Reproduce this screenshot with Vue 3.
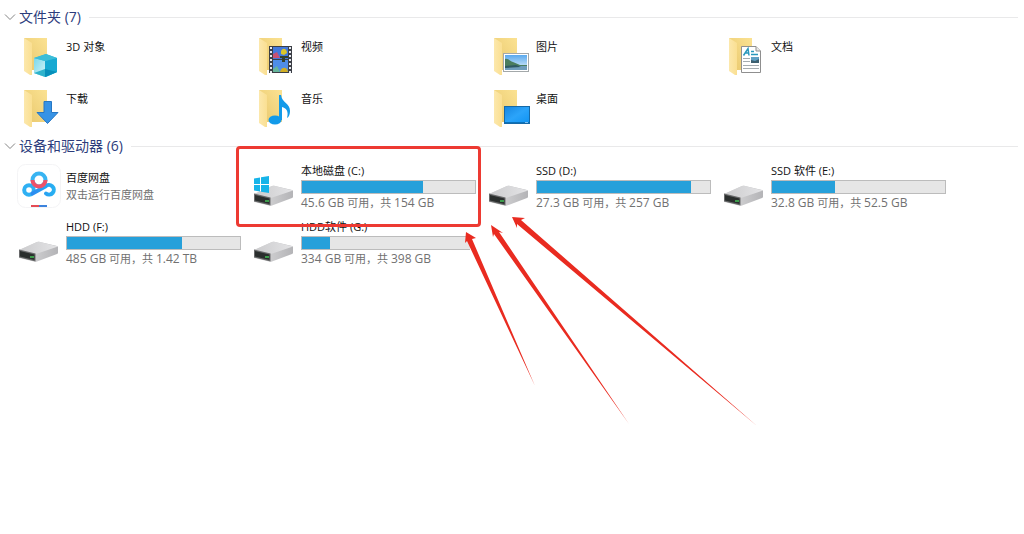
<script setup>
import { ref } from 'vue'

const folders = [
  { name: '3D 对象', kind: 'cube' },
  { name: '视频', kind: 'video' },
  { name: '图片', kind: 'picture' },
  { name: '文档', kind: 'document' },
  { name: '下载', kind: 'download' },
  { name: '音乐', kind: 'music' },
  { name: '桌面', kind: 'desktop' }
]

const drives = [
  { name: '本地磁盘 (C:)', used: 70, free: '45.6 GB', total: '154 GB', system: true },
  { name: 'SSD (D:)', used: 89, free: '27.3 GB', total: '257 GB' },
  { name: 'SSD 软件 (E:)', used: 36.5, free: '32.8 GB', total: '52.5 GB' },
  { name: 'HDD (F:)', used: 66.5, free: '485 GB', total: '1.42 TB' },
  { name: 'HDD软件 (G:)', used: 16.7, free: '334 GB', total: '398 GB', cut: true }
]

const arrows = [
  '466,232 476,238 472,239 535,386 467,241 465,243',
  '491,225 503,233 499,232 629,424 494,234 493,237',
  '512,217 525,218 521,220 757,426 517,224 517,228'
]

const foldersOpen = ref(true)
const drivesOpen = ref(true)
</script>

<template>
  <main class="explorer">
    <svg class="defs" width="0" height="0" aria-hidden="true">
      <defs>
        <linearGradient id="folderBack" x1="0" x2="1" y1="1" y2="0">
          <stop offset="0" stop-color="#e8c76c" /><stop offset="1" stop-color="#fbe292" />
        </linearGradient>
        <linearGradient id="folderFront" x1="0" x2="1">
          <stop offset="0" stop-color="#fce8ac" /><stop offset="1" stop-color="#fadf92" />
        </linearGradient>
        <linearGradient id="driveTop" x1="0" x2="1">
          <stop offset="0" stop-color="#cbcbcd" /><stop offset="1" stop-color="#e4e4e6" />
        </linearGradient>
        <linearGradient id="driveSide" x1="0" x2="1">
          <stop offset="0" stop-color="#dededf" /><stop offset="1" stop-color="#b4b4b7" />
        </linearGradient>
        <linearGradient id="sky" x1="0" x2="0" y1="0" y2="1">
          <stop offset="0" stop-color="#5aa9ee" /><stop offset="1" stop-color="#e4f2fa" />
        </linearGradient>
        <linearGradient id="screen" x1="0" x2="1" y1="0" y2="1">
          <stop offset="0" stop-color="#1585e0" /><stop offset="0.5" stop-color="#2ba4fa" /><stop offset="1" stop-color="#0f93f2" />
        </linearGradient>
        <linearGradient id="cloud" x1="0" x2="1">
          <stop offset="0" stop-color="#2c8bf0" /><stop offset="1" stop-color="#27b0f2" />
        </linearGradient>
        <linearGradient id="cubeLeft" x1="0" x2="1" y1="0" y2="1">
          <stop offset="0" stop-color="#7bd8ea" /><stop offset="1" stop-color="#d4f3f7" />
        </linearGradient>
      </defs>
    </svg>

    <section>
      <h2 class="heading">
        <button type="button" class="toggle" :aria-expanded="foldersOpen" @click="foldersOpen = !foldersOpen">
          <svg class="chevron" viewBox="0 0 12 12" aria-hidden="true"><path d="M1 3.500 6 8.500 11 3.500" /></svg>
          文件夹 (7)
        </button>
      </h2>
      <ul v-show="foldersOpen" class="grid folders">
        <li v-for="f in folders" :key="f.name" class="tile">
          <svg class="icon" viewBox="0 0 46 44" aria-hidden="true">
            <path d="M8 3H31V35H14Z" fill="url(#folderBack)" />
            <path d="M8 3 16 8V40L14 40 8 36Z" fill="url(#folderFront)" />
            <g v-if="f.kind === 'cube'">
              <path d="M18 23 30 19 41 23V37L30 42 18 38Z" fill="#2fb9d6" />
              <path d="M18 23 29 26V42L18 38Z" fill="url(#cubeLeft)" />
              <path d="M29 26 41 23V37L29 42Z" fill="#17a9d2" />
              <path d="M18 23 30 19 41 23 29 26Z" fill="#3cbdd8" />
              <path d="M18 38 29 34V42Z" fill="#2fb3cc" />
              <path d="M29 34 41 37 29 42Z" fill="#078fba" />
            </g>
            <g v-else-if="f.kind === 'video'">
              <rect x="18" y="11" width="23" height="27" fill="#3c3f46" />
              <path d="M20 12V38M39 12V38" stroke="#e7eaf0" stroke-width="2" stroke-dasharray="2 2" />
              <rect x="22" y="12" width="15" height="12" fill="#4278da" />
              <rect x="22" y="25" width="15" height="12" fill="#4f8de9" />
              <path d="M22 19 26 17 29 23H22Z" fill="#c85172" />
              <path d="M30 16C32 12 36 14 36 18L33 20 30 19Z" fill="#dbc528" />
              <path d="M29 21H37V23H34V27H31V23H29Z" fill="#34402b" />
              <path d="M22 34 26 31 29 37H22Z" fill="#67b59a" />
              <path d="M29 37C30 32 36 31 37 37Z" fill="#d1ae24" />
            </g>
            <g v-else-if="f.kind === 'picture'">
              <rect x="17.500" y="18.500" width="25" height="18" fill="#fff" stroke="#a3a8aa" />
              <rect x="19" y="20" width="22" height="15" fill="url(#sky)" />
              <path d="M19 24C22 23 24 26 27 27L34 30 41 30V32H19Z" fill="#4a7d5e" />
              <path d="M19 31H41V35H19Z" fill="#6f9dbb" />
              <path d="M19 31 30 30 35 32 19 33Z" fill="#2f5a62" />
            </g>
            <g v-else-if="f.kind === 'document'">
              <path d="M20.500 11.500H35L39.500 16V37.500H20.500Z" fill="#fff" stroke="#8f8f8f" />
              <path d="M35 11.500V16H39.500" fill="#e9e9e9" stroke="#8f8f8f" />
              <path d="M22.500 20.500 27 13.500 28 20.500M24 18H28M30 16.500H33M30 19.500H37" fill="none" stroke="#2998bc" stroke-width="1.500" />
              <path d="M22 23.500H29M22 26.500H29M22 30.500H38M22 33.500H38" stroke="#a5acb0" />
              <rect x="30" y="22" width="8" height="6" fill="#5fa0c4" />
              <path d="M30 25 34 26 38 24V28H30Z" fill="#3c5f70" />
            </g>
            <path v-else-if="f.kind === 'download'" d="M28 14.500H35.500V25.500H42L31.500 36.500 21 25.500H28Z" fill="#3793e5" stroke="#2677c4" />
            <g v-else-if="f.kind === 'music'" fill="#139ae9">
              <ellipse cx="24" cy="33" rx="6.500" ry="4.500" />
              <path d="M28 33V8H30C31 16 39 16 39 24 39 27 38 30 36 31 38 24 35 21 31 20V33Z" />
            </g>
            <g v-else>
              <rect x="18.500" y="19.500" width="25" height="17" fill="url(#screen)" stroke="#1669a7" />
              <path d="M19 35.500H43" stroke="#0a72bb" />
              <path d="M39 35.500H42" stroke="#7fbfee" />
            </g>
          </svg>
          <a href="#" class="name">{{ f.name }}</a>
        </li>
      </ul>
    </section>

    <section>
      <h2 class="heading">
        <button type="button" class="toggle" :aria-expanded="drivesOpen" @click="drivesOpen = !drivesOpen">
          <svg class="chevron" viewBox="0 0 12 12" aria-hidden="true"><path d="M1 3.500 6 8.500 11 3.500" /></svg>
          设备和驱动器 (6)
        </button>
      </h2>
      <ul v-show="drivesOpen" class="grid devices">
        <li class="tile app">
          <svg class="icon" viewBox="0 0 46 46" aria-hidden="true">
            <rect x="1.500" y="1.500" width="43" height="43" rx="8" fill="#fff" stroke="#f4f4f6" />
            <g fill="none" stroke-width="4">
              <circle cx="13" cy="27" r="4.800" stroke="#2fb0f3" />
              <path d="M16.500 30.500 29.500 23.500A4.800 4.800 0 1 1 30 30.500" stroke="url(#cloud)" stroke-linecap="round" />
              <circle cx="23" cy="17" r="6.500" stroke="#38b4f2" />
              <path d="M16.500 17A6.500 6.500 0 0 0 29.500 17" stroke="#ef5168" />
            </g>
            <path d="M15 43H23" stroke="#e54b55" stroke-width="2" />
            <path d="M23 43H31" stroke="#3c83dd" stroke-width="2" />
          </svg>
          <div class="body">
            <a href="#" class="name">百度网盘</a>
            <span class="info">双击运行百度网盘</span>
          </div>
        </li>
        <li v-for="d in drives" :key="d.name" class="tile">
          <svg class="icon" viewBox="0 0 46 46" aria-hidden="true">
            <path d="M3 31 21 23Q22 22.500 23 22.700L41 27Q42 27.300 42 28V34Q42 34.600 41 35L21 42.500Q20 43 19 42.700L3 39Z" fill="url(#driveSide)" />
            <path d="M3 31 21 23Q22 22.500 23 22.700L42 27.500 20 35Z" fill="url(#driveTop)" />
            <path d="M3 30.500 19.500 34.500V42.500L3 38.500Z" fill="#68696a" />
            <path d="M4 32 18.500 35.500V41L4 37.500Z" fill="#2a2e2d" />
            <path d="M14 38H18" stroke="#3d9c4c" stroke-width="2" />
            <path v-if="d.system" d="M3 15.500 9 14.500V21H3ZM10 14.300 18 13V21H10ZM3 22H9V28.500L3 27.500ZM10 22H18V30L10 28.700Z" fill="#17b4e9" />
          </svg>
          <div class="body">
            <a href="#" class="name">{{ d.name }}</a>
            <div class="bar" :class="{ cut: d.cut }" role="meter" :aria-label="d.name" aria-valuemin="0" aria-valuemax="100" :aria-valuenow="d.used">
              <div class="used" :style="{ width: d.used + '%' }"></div>
            </div>
            <span class="info"><span class="size">{{ d.free }}</span> 可用，共 <span class="size">{{ d.total }}</span></span>
          </div>
        </li>
      </ul>
    </section>

    <div class="marker"></div>
    <svg class="arrows" width="1024" height="534" viewBox="0 0 1024 534" aria-hidden="true">
      <polygon v-for="a in arrows" :key="a" :points="a" />
    </svg>
  </main>
</template>

<style>
body {
  margin: 0;
  background: #fff;
}
</style>

<style scoped>
.explorer {
  position: relative;
  min-height: 100vh;
  box-sizing: border-box;
  padding: 7px 6px 0 4px;
  overflow: hidden;
  font: 11px/16px "Open Sans", "Noto Sans CJK SC", sans-serif;
  color: #111;
}
.defs {
  position: absolute;
}
.heading {
  display: flex;
  align-items: center;
  gap: 8px;
  height: 20px;
  margin: 0;
}
.heading::after {
  content: "";
  flex: 1;
  height: 1px;
  background: #e9e9ea;
}
.toggle {
  display: flex;
  align-items: center;
  gap: 3px;
  padding: 0;
  border: 0;
  background: none;
  color: #2c3c7c;
  font: 14px/20px "Open Sans", "Noto Sans CJK SC", sans-serif;
}
.chevron {
  width: 12px;
  height: 12px;
  fill: none;
  stroke: #858585;
}
.grid {
  display: grid;
  grid-template-columns: repeat(auto-fill, 235px);
  margin: 0;
  padding: 8px 0 0 12px;
  list-style: none;
}
.folders {
  grid-auto-rows: 52px;
  margin-bottom: -3px;
}
.devices {
  grid-auto-rows: 56px;
  padding-top: 7px;
}
.tile {
  display: flex;
  gap: 4px;
}
.icon {
  flex: none;
  width: 46px;
}
.folders .icon {
  height: 44px;
}
.devices .icon {
  height: 46px;
}
.folders .name {
  padding-top: 4px;
}
.body {
  display: flex;
  flex-direction: column;
  width: 175px;
}
.app .body {
  padding-top: 7px;
}
.name {
  color: inherit;
  text-decoration: none;
  white-space: nowrap;
}
.bar {
  box-sizing: border-box;
  height: 14px;
  margin-top: 1px;
  border: 1px solid #bcbcbc;
  background: #e6e6e6;
}
.bar.cut {
  width: 169px;
  border-right: 0;
}
.used {
  height: 100%;
  background: #26a0da;
}
.info {
  color: #717171;
  line-height: 17px;
  white-space: nowrap;
}
.size {
  font-size: 12px;
}
.marker {
  position: absolute;
  left: 236px;
  top: 146px;
  box-sizing: border-box;
  width: 245px;
  height: 81px;
  border: 3px solid #ed3a32;
  border-radius: 4px;
}
.arrows {
  position: absolute;
  left: 0;
  top: 0;
  fill: #e92b20;
  pointer-events: none;
}
</style>
